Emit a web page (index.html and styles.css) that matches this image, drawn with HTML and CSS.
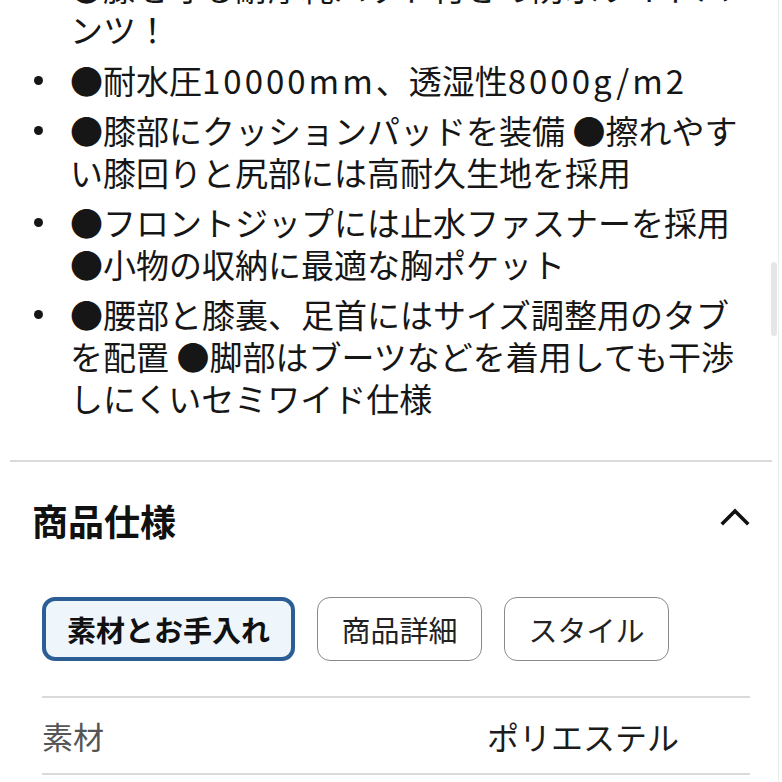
FILE: index.html
```html
<!DOCTYPE html>
<html lang="ja">
<head>
<meta charset="utf-8">
<title>商品仕様</title>
<link rel="stylesheet" href="styles.css">
</head>
<body>
<div class="page">
  <section class="desc">
    <ul class="features">
      <li><span class="dot"></span><span class="txt">●膝を守る耐摩耗パッド付きの防水ワイドパンツ！</span></li>
      <li><span class="dot"></span><span class="txt">●耐水圧<span class="lat">10000mm</span>、透湿性<span class="lat">8000g/m2</span></span></li>
      <li><span class="dot"></span><span class="txt">●膝部にクッションパッドを装備 ●擦れやすい膝回りと尻部には高耐久生地を採用</span></li>
      <li><span class="dot"></span><span class="txt">●フロントジップには止水ファスナーを採用 ●小物の収納に最適な胸ポケット</span></li>
      <li><span class="dot"></span><span class="txt">●腰部と膝裏、足首にはサイズ調整用のタブを配置 ●脚部はブーツなどを着用しても干渉しにくいセミワイド仕様</span></li>
    </ul>
  </section>
  <section class="spec">
    <div class="spec-head">
      <h2 class="spec-title">商品仕様</h2>
      <svg class="chev" width="30" height="20" viewBox="0 0 30 20" aria-hidden="true">
        <polyline points="3,17 15,5 27,17" fill="none" stroke="#111" stroke-width="3.6" stroke-linecap="square" stroke-linejoin="miter"/>
      </svg>
    </div>
    <div class="tabs">
      <button class="tab active">素材とお手入れ</button>
      <button class="tab">商品詳細</button>
      <button class="tab">スタイル</button>
    </div>
    <div class="table">
      <div class="row">
        <span class="label">素材</span>
        <span class="value">ポリエステル</span>
      </div>
    </div>
  </section>
</div>
<div class="scroll-track"><div class="scroll-thumb"></div></div>
</body>
</html>
```
FILE: styles.css
```css
html, body {
  margin: 0;
  padding: 0;
  background: #ffffff;
}
body {
  font-family: "Noto Sans CJK JP", "Noto Sans", sans-serif;
  color: #161616;
  overflow: hidden;
}
.page {
  padding: 0 10px;
}
.desc {
  padding-bottom: 41px;
  border-bottom: 2px solid #dadada;
}
.features {
  list-style: none;
  margin: -34px 0 0 0;
  padding: 0;
}
.features li {
  display: grid;
  grid-template-columns: 60px 680px;
  margin-bottom: 8px;
  font-size: 33px;
  line-height: 42px;
}
.features li:first-child {
  margin-bottom: 9px;
}
.features li:last-child {
  margin-bottom: 0;
}
.dot {
  width: 9px;
  height: 9px;
  border-radius: 50%;
  background: #161616;
  margin: 17px 0 0 24px;
}
.txt {
  word-break: normal;
  line-break: strict;
}
.lat {
  letter-spacing: 3px;
}
.spec {
  padding: 33px 22px 0 22px;
}
.spec-head {
  display: flex;
  align-items: center;
  justify-content: space-between;
  height: 50px;
}
.spec-title {
  margin: 0;
  font-size: 36px;
  font-weight: 700;
  line-height: 50px;
  color: #111;
}
.chev {
  display: block;
  margin-top: -8px;
}
.tabs {
  display: flex;
  gap: 22px;
  margin: 52px 0 0 10px;
}
.tab {
  font-family: "Noto Sans CJK JP", "Noto Sans", sans-serif;
  font-size: 29px;
  line-height: 36px;
  color: #222;
  background: #ffffff;
  border: 1.5px solid #8a8a8a;
  border-radius: 13px;
  padding: 12.5px 23.5px;
  cursor: pointer;
}
.tab.active {
  font-weight: 700;
  color: #111;
  background: #eef6fc;
  border: 4px solid #2c5e96;
  padding: 10px 21px;
}
.table {
  margin: 35px 0 0 10px;
  border-top: 2px solid #dadada;
}
.row {
  display: grid;
  grid-template-columns: 445px 1fr;
  align-items: center;
  height: 75px;
  border-bottom: 2px solid #dadada;
  font-size: 31px;
}
.label {
  color: #555;
}
.value {
  color: #1c1c1c;
  font-size: 32px;
}
.scroll-track {
  position: fixed;
  top: 0;
  right: 0;
  width: 3px;
  height: 100%;
  border-left: 1px solid #ededed;
}
.scroll-thumb {
  position: absolute;
  top: 262px;
  right: 5px;
  width: 6px;
  height: 74px;
  border-radius: 3px;
  background: #e6e6e6;
}
```
